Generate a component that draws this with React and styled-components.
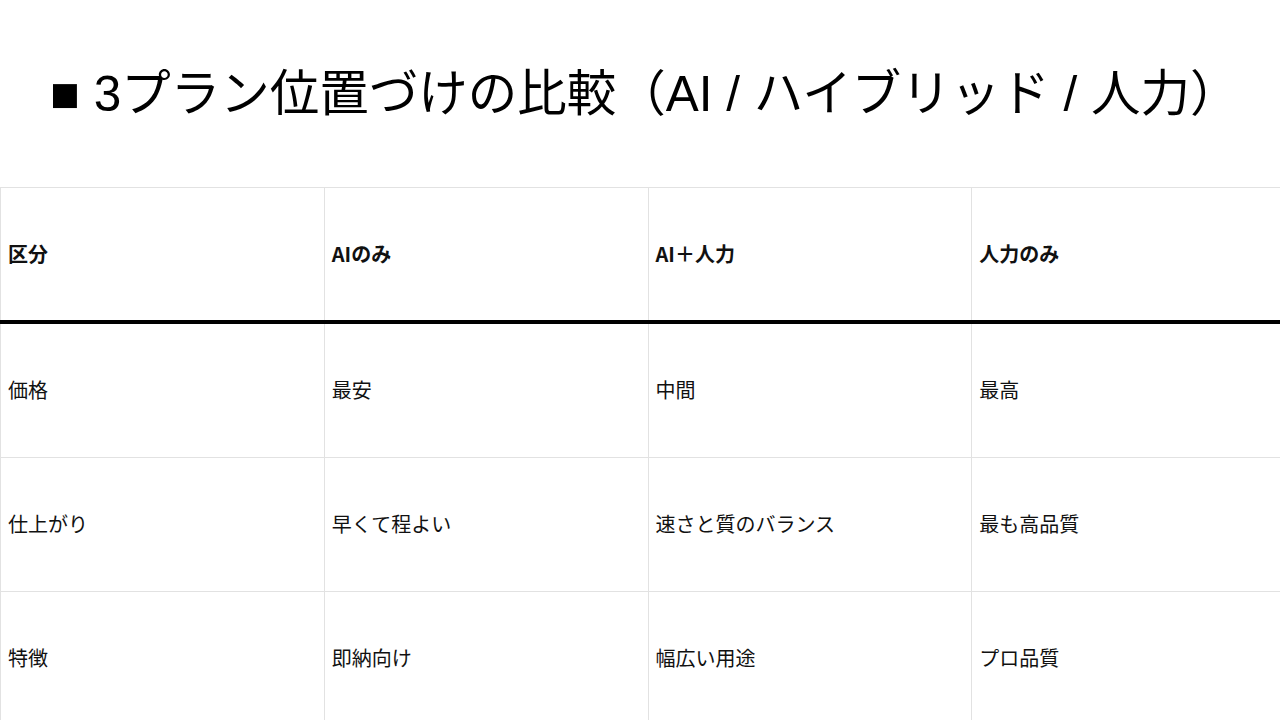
import React from 'react';
import styled, { createGlobalStyle } from 'styled-components';

const GlobalStyle = createGlobalStyle`
  html, body {
    margin: 0;
    padding: 0;
    background: #ffffff;
    overflow: hidden;
  }
  body {
    font-family: "Noto Sans CJK JP", "Noto Sans", sans-serif;
    color: #111111;
  }
`;

const Page = styled.div`
  width: 1280px;
  height: 720px;
  overflow: hidden;
  display: flex;
  flex-direction: column;
`;

const Title = styled.h1`
  flex-shrink: 0;
  margin: 0;
  padding: 0 0 8px 50px;
  height: 179px;
  display: flex;
  align-items: center;
  font-family: "Liberation Sans", "Noto Sans CJK JP", sans-serif;
  font-size: 49.5px;
  font-weight: 400;
  white-space: nowrap;
  color: #000;
`;

const Table = styled.table`
  flex-shrink: 0;
  width: 1296px;
  border-collapse: collapse;
  table-layout: fixed;
`;

const HeadCell = styled.th`
  height: 130px;
  padding: 0 7px 2px;
  text-align: left;
  font-size: 20px;
  font-weight: 700;
  border: 1px solid #e2e2e2;
  border-bottom: 4px solid #000;
  vertical-align: middle;
`;

const Cell = styled.td`
  height: 130px;
  padding: 0 7px 3px;
  text-align: left;
  font-size: 20px;
  font-weight: 400;
  border: 1px solid #e2e2e2;
  vertical-align: middle;
`;

const headers = ['区分', 'AIのみ', 'AI＋人力', '人力のみ'];

const rows = [
  ['価格', '最安', '中間', '最高'],
  ['仕上がり', '早くて程よい', '速さと質のバランス', '最も高品質'],
  ['特徴', '即納向け', '幅広い用途', 'プロ品質'],
];

export default function App() {
  return (
    <>
      <GlobalStyle />
      <Page>
        <Title>■ 3プラン位置づけの比較（AI / ハイブリッド / 人力）</Title>
        <Table>
          <thead>
            <tr>
              {headers.map((h) => (
                <HeadCell key={h}>{h}</HeadCell>
              ))}
            </tr>
          </thead>
          <tbody>
            {rows.map((r) => (
              <tr key={r[0]}>
                {r.map((c) => (
                  <Cell key={c}>{c}</Cell>
                ))}
              </tr>
            ))}
          </tbody>
        </Table>
      </Page>
    </>
  );
}
